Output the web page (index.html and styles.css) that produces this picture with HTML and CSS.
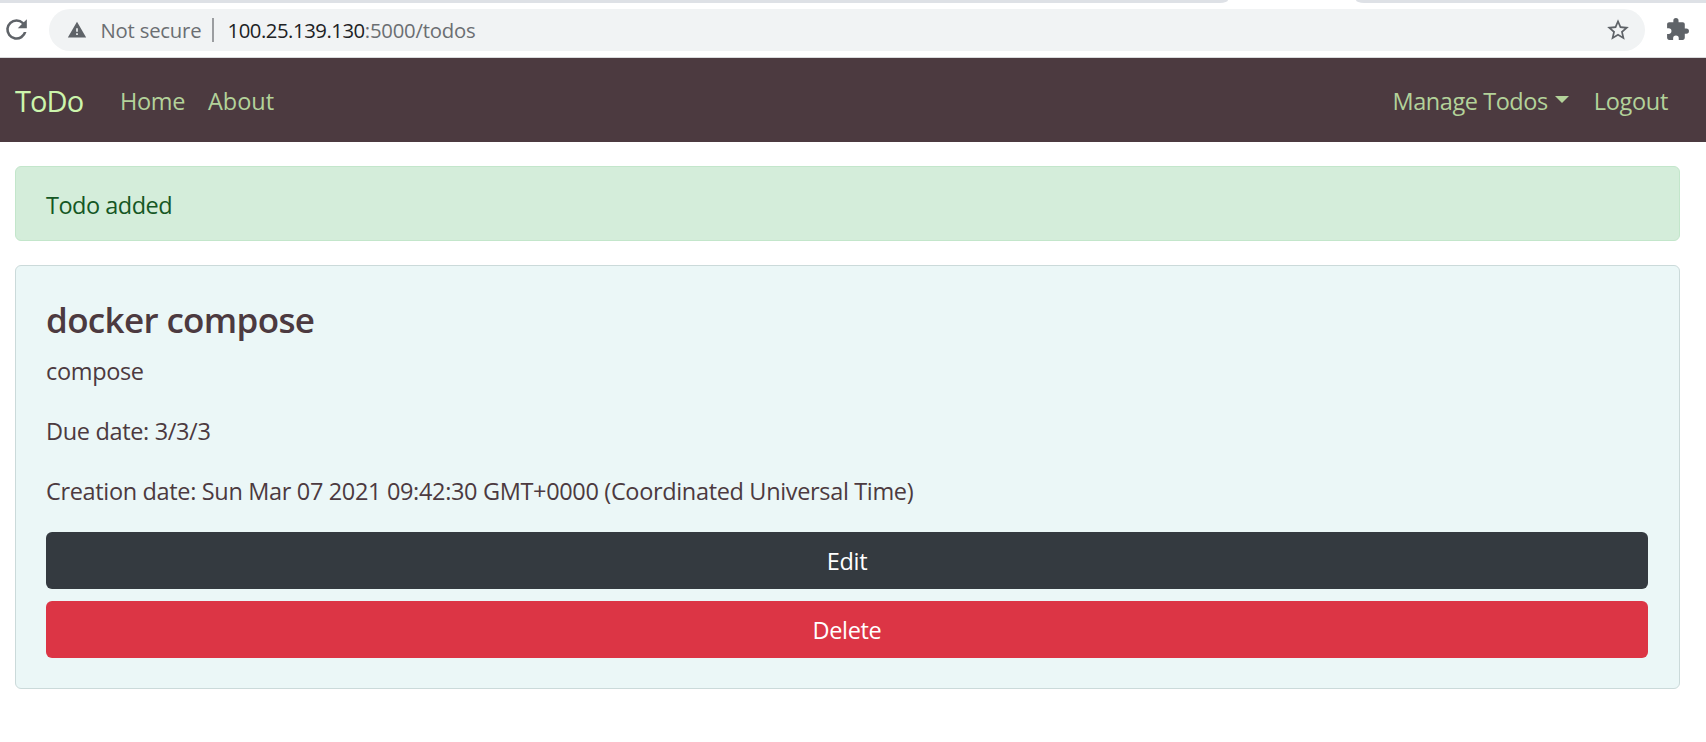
FILE: index.html
```html
<!DOCTYPE html>
<html lang="en">
<head>
<meta charset="utf-8">
<title>ToDo</title>
<link rel="stylesheet" href="styles.css">
</head>
<body>
<header class="browser">
  <div class="tabs"><span class="tab-edge tab-edge-left"></span><span class="tab-edge tab-edge-right"></span></div>
  <div class="toolbar">
    <svg class="reload" viewBox="0 0 24 24"><path d="M17.65 6.35A7.95 7.95 0 0 0 12 4a8 8 0 1 0 7.73 10h-2.08A6 6 0 1 1 12 6c1.66 0 3.14.69 4.22 1.78L13 11h7V4z"/></svg>
    <div class="address">
      <svg class="warning" viewBox="0 0 24 24"><path d="M1 21h22L12 2zm12-3h-2v-2h2zm0-4h-2v-4h2z"/></svg>
      <span class="status">Not secure</span>
      <span class="divider"></span>
      <span class="url"><span class="host">100.25.139.130</span><span class="path">:5000/todos</span></span>
      <svg class="star" viewBox="0 0 24 24"><path d="M22 9.24l-7.19-.62L12 2 9.19 8.63 2 9.24l5.46 4.73L5.82 21 12 17.27 18.18 21l-1.63-7.03zM12 15.4l-3.76 2.27 1-4.28-3.32-2.88 4.38-.38L12 6.1l1.71 4.04 4.38.38-3.32 2.88 1 4.28z"/></svg>
    </div>
    <svg class="puzzle" viewBox="0 0 24 24"><path d="M20.5 11H19V7c0-1.1-.9-2-2-2h-4V3.500a2.500 2.500 0 0 0-5 0V5H4c-1.100 0-1.990.900-1.990 2v3.800H3.500a2.700 2.700 0 0 1 0 5.400H2V20c0 1.100.900 2 2 2h3.800v-1.500a2.700 2.700 0 0 1 5.400 0V22H17c1.100 0 2-.900 2-2v-4h1.500a2.500 2.500 0 0 0 0-5z"/></svg>
  </div>
</header>
<nav class="navbar">
  <a class="brand">ToDo</a>
  <a class="nav-link home">Home</a>
  <a class="nav-link about">About</a>
  <a class="nav-link manage">Manage Todos</a>
  <span class="caret"></span>
  <a class="nav-link logout">Logout</a>
</nav>
<main class="content">
  <div class="alert">Todo added</div>
  <section class="card">
    <h4 class="title">docker compose</h4>
    <p class="text">compose</p>
    <p class="text due">Due date: 3/3/3</p>
    <p class="text created">Creation date: Sun Mar 07 2021 09:42:30 GMT+0000 (Coordinated Universal Time)</p>
    <a class="btn btn-dark">Edit</a>
    <a class="btn btn-danger">Delete</a>
  </section>
</main>
</body>
</html>
```
FILE: styles.css
```css
* { box-sizing: border-box; }
body {
  margin: 0;
  height: 742px;
  overflow: hidden;
  background: #fff;
  color: #4c3a40;
  font: 23.5px/36px "Open Sans", "Noto Sans", sans-serif;
  letter-spacing: -0.34px;
}
.browser { height: 58px; border-bottom: 1px solid #d9dadc; }
.tabs { display: flex; justify-content: space-between; height: 3px; }
.tab-edge { background: #dee1e6; }
.tab-edge-left { width: 1228px; border-bottom-right-radius: 8px 3px; }
.tab-edge-right { width: 350px; border-bottom-left-radius: 8px 3px; }
.toolbar { display: flex; padding-top: 6px; height: 54px; }
.toolbar svg { flex: none; fill: #5f6368; }
.reload { width: 31px; height: 31px; margin: 5px 17px 0 1px; }
.address {
  display: flex;
  align-items: center;
  width: 1596px;
  height: 42px;
  border-radius: 21px;
  background: #f1f3f4;
  font-size: 20.3px;
  letter-spacing: -0.2px;
  color: #6b6e72;
  white-space: nowrap;
}
.warning { width: 20px; height: 20px; margin-left: 17.5px; }
.status { width: 111px; margin-left: 14px; }
.divider { width: 2px; height: 24px; background: #9b9da0; }
.url { margin-left: 14px; }
.host { color: #202124; letter-spacing: -0.45px; }
.star { width: 26px; height: 26px; margin: 0 14px 0 auto; }
.puzzle { width: 25px; height: 25px; margin: 8px 0 0 20px; }
.navbar {
  display: flex;
  align-items: center;
  height: 84px;
  padding: 2px 38px 0 15px;
  background: #4c3a40;
  white-space: nowrap;
}
.brand { width: 105px; color: #ccf5ac; font-size: 29px; letter-spacing: -0.9px; }
.nav-link { color: #b3d29a; }
.home { width: 88px; }
.about { letter-spacing: 0; }
.manage { margin-left: auto; letter-spacing: -0.45px; }
.logout { letter-spacing: -0.3px; }
.caret {
  margin: -3px 25px 0 7px;
  border: 7px solid transparent;
  border-top-color: #b3d29a;
  border-bottom: 0;
}
.content { padding: 24px 26px 0 15px; }
.alert {
  height: 75px;
  padding: 20px 30px;
  border: 1px solid #c3e6cb;
  border-radius: 6px;
  background: #d4edda;
  color: #155724;
  letter-spacing: -0.5px;
}
.card {
  height: 424px;
  margin-top: 24px;
  padding: 32px 31px 28px 30px;
  border: 1px solid #cbdada;
  border-radius: 6px;
  background: #ebf7f7;
}
.title { margin: 0 0 12px; font-size: 35px; font-weight: 600; line-height: 43px; letter-spacing: -0.65px; }
.text { margin: 0 0 24px; white-space: nowrap; }
.created { margin-bottom: 23px; }
.btn {
  display: block;
  height: 57px;
  border-radius: 6px;
  color: #fff;
  line-height: 58px;
  text-align: center;
}
.btn-dark { margin-bottom: 12px; background: #343a40; }
.btn-danger { background: #dc3545; }
```
